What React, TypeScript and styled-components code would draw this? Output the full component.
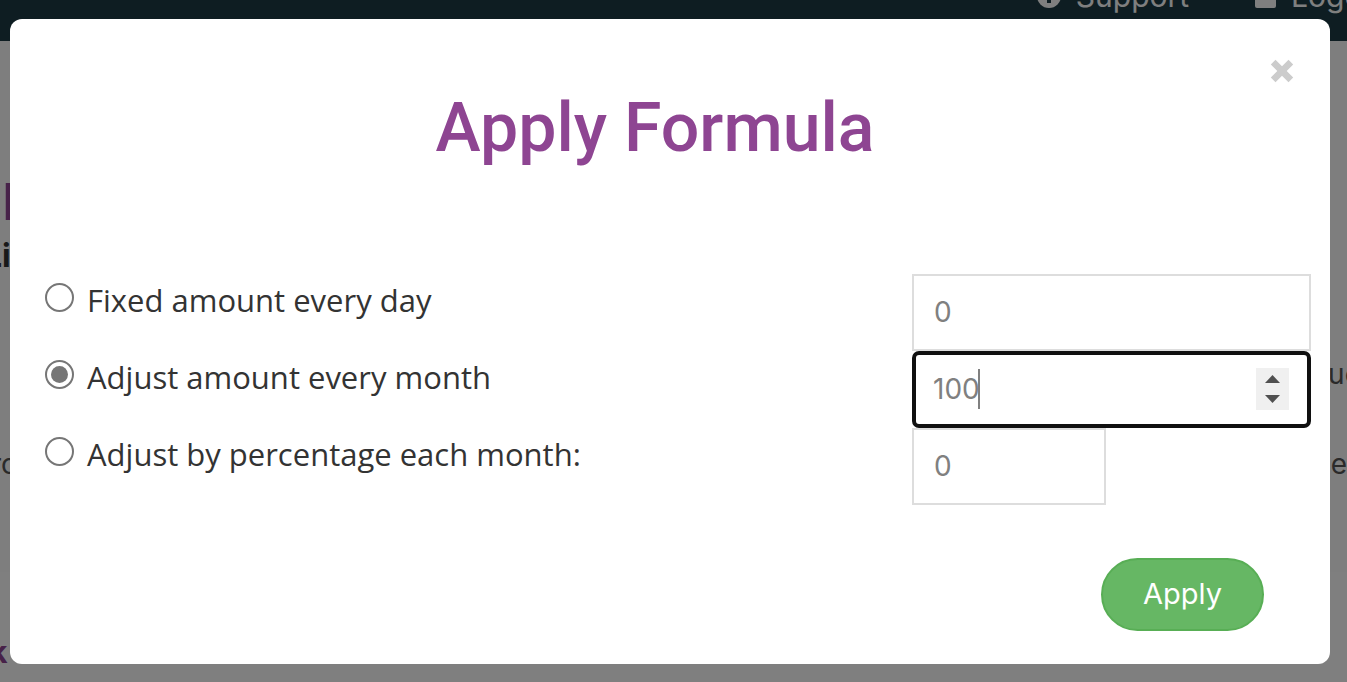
import React, { useState } from "react";
import styled, { createGlobalStyle, css } from "styled-components";

const GlobalStyle = createGlobalStyle`
  *, *::before, *::after { box-sizing: border-box; }
  body { margin: 0; background: #ffffff; }
`;

const uiFont = `Inter, "Liberation Sans", sans-serif`;
const labelFont = `"Open Sans", "Noto Sans", sans-serif`;
const titleFont = `Roboto, "Liberation Sans", sans-serif`;

const Page = styled.div`
  display: flex;
  flex-direction: column;
  height: 100vh;
  overflow: hidden;
  font-family: ${uiFont};
  color: #555555;
`;

const TopBar = styled.header`
  display: flex;
  flex: none;
  justify-content: flex-end;
  align-items: flex-start;
  height: 41px;
  overflow: hidden;
  background: #1c3b44;
`;

const TopNav = styled.nav`
  display: flex;
  flex: none;
  gap: 66px;
  margin: -24px -43px 0 0;
`;

const TopLink = styled.a`
  display: flex;
  align-items: center;
  gap: 15px;
  font-size: 30px;
  line-height: 40px;
  color: #ffffff;
  text-decoration: none;
`;

const Content = styled.main`
  flex: none;
  height: 531px;
  background: #fcfcfc;
  overflow: hidden;
`;

const Below = styled.section`
  flex: 1;
  padding-top: 60px;
  overflow: hidden;
`;

const PageTitle = styled.h1`
  margin: 132px 0 0 2px;
  font: 500 52px/60px ${titleFont};
  color: #8e4592;
`;

const SubTitle = styled.h2`
  margin: 3px 0 0 -16px;
  font: 700 32px/40px ${uiFont};
  color: #333333;
`;

const EdgeRow = styled.div<{ $gap: number; $bleed: number }>`
  display: flex;
  justify-content: space-between;
  margin: ${(p) => p.$gap}px ${(p) => -p.$bleed}px 0 -9px;
  font-size: 28px;
  line-height: 40px;
`;

const LowerTitle = styled.h3`
  margin: 0 0 0 -10px;
  font: 700 32px/40px ${titleFont};
  color: #8e4592;
`;

const Overlay = styled.div`
  position: fixed;
  inset: 0;
  padding: 19px 17px 18px 10px;
  overflow: auto;
  background: rgba(0, 0, 0, 0.5);
`;

const Dialog = styled.section`
  padding-bottom: 33px;
  border-radius: 12px;
  background: #ffffff;
`;

const CloseRow = styled.div`
  display: flex;
  justify-content: flex-end;
  padding: 40px 36px 0 0;
`;

const CloseButton = styled.button`
  display: flex;
  padding: 0;
  border: 0;
  background: none;
  cursor: pointer;
`;

const Title = styled.h2`
  margin: 0;
  padding-right: 30px;
  font: 500 68px/90px ${titleFont};
  color: #8e4592;
  text-align: center;
`;

const Form = styled.form`
  padding: 101px 19px 0 35px;
`;

const Row = styled.div`
  display: grid;
  grid-template-columns: 867fr 399fr;
  height: 77px;
`;

const Option = styled.label`
  display: flex;
  align-items: flex-start;
  gap: 13px;
  padding-top: 5px;
  font: 400 31px/42px ${labelFont};
  color: #333333;
`;

const Radio = styled.input`
  appearance: none;
  display: grid;
  place-items: center;
  flex: none;
  width: 29px;
  height: 29px;
  margin: 4px 0 0;
  border: 2px solid #767676;
  border-radius: 50%;

  &:checked::before {
    content: "";
    width: 17px;
    height: 17px;
    border-radius: 50%;
    background: #767676;
  }
`;

const Field = styled.div<{ $half?: boolean }>`
  position: relative;
  width: ${(p) => (p.$half ? "194px" : "100%")};
`;

const NumberInput = styled.input<{ $active?: boolean }>`
  display: block;
  appearance: textfield;
  width: 100%;
  height: 77px;
  padding: 0 20px 2px;
  border: 2px solid #dddddd;
  border-radius: 0;
  outline: none;
  background: #ffffff;
  font: 400 28px/40px ${uiFont};
  color: #808080;

  &::-webkit-inner-spin-button { appearance: none; margin: 0; }

  ${(p) =>
    p.$active &&
    css`
      padding: 0 17px 2px;
      border: 4px solid #101010;
      border-radius: 7px;
    `}
`;

const Caret = styled.span`
  position: absolute;
  top: 18px;
  left: 66px;
  width: 2px;
  height: 40px;
  background: #808080;
`;

const Stepper = styled.div`
  position: absolute;
  top: 17px;
  right: 22px;
  display: flex;
  flex-direction: column;
  width: 33px;
  height: 42px;
  background: #f0f0f0;
`;

const StepButton = styled.button<{ $down?: boolean }>`
  display: flex;
  flex: 1;
  justify-content: center;
  align-items: ${(p) => (p.$down ? "flex-start" : "flex-end")};
  padding: 6px 0;
  border: 0;
  background: none;
`;

const Actions = styled.div`
  display: flex;
  justify-content: flex-end;
  padding: 53px 47px 0 0;
`;

const ApplyButton = styled.button`
  height: 73px;
  padding: 0 40px 2px;
  border: 2px solid #58ae55;
  border-radius: 37px;
  background: #66b764;
  font: 400 29px/40px ${uiFont};
  color: #ffffff;
  cursor: pointer;
`;

const options = [
  { id: "fixed", label: "Fixed amount every day", initial: "0" },
  { id: "monthly", label: "Adjust amount every month", initial: "100" },
  { id: "percent", label: "Adjust by percentage each month:", initial: "0" },
];

export default function App() {
  const [selected, setSelected] = useState("monthly");
  const [values, setValues] = useState<Record<string, string>>(
    Object.fromEntries(options.map((o) => [o.id, o.initial]))
  );
  const change = (id: string, value: string) =>
    setValues((v) => ({ ...v, [id]: value }));
  const step = (id: string, by: number) =>
    change(id, String(Number(values[id]) + by));

  return (
    <>
      <GlobalStyle />
      <Page>
        <TopBar>
          <TopNav>
            <TopLink href="#support">
              <svg width="24" height="24" viewBox="0 0 24 24">
                <circle cx="12" cy="12" r="12" fill="#fff" />
                <path d="M10 5h4v3h-4zM10 10h4v9h-4z" fill="#1c3b44" />
              </svg>
              Support
            </TopLink>
            <TopLink href="#logout">
              <svg width="21" height="26" viewBox="0 0 21 26">
                <path d="M5 12V7a5.5 5.5 0 0 1 11 0v5" fill="none" stroke="#fff" strokeWidth="3" />
                <rect y="11" width="21" height="14" rx="2" fill="#fff" />
              </svg>
              Logout
            </TopLink>
          </TopNav>
        </TopBar>
        <Content>
          <PageTitle>F</PageTitle>
          <SubTitle>Li</SubTitle>
          <EdgeRow $gap={78} $bleed={14}>
            <span />
            <span>ue</span>
          </EdgeRow>
          <EdgeRow $gap={50} $bleed={0}>
            <span>ro</span>
            <span>e</span>
          </EdgeRow>
        </Content>
        <Below>
          <LowerTitle>k</LowerTitle>
        </Below>
      </Page>

      <Overlay>
        <Dialog role="dialog" aria-modal="true" aria-labelledby="dialog-title">
          <CloseRow>
            <CloseButton type="button" aria-label="Close">
              <svg width="24" height="24" viewBox="0 0 24 24">
                <path
                  d="M5.5.8 12 7.3 18.5.8l4.7 4.7-6.5 6.5 6.5 6.5-4.7 4.7-6.5-6.5-6.5 6.5-4.7-4.7L7.3 12 .8 5.5z"
                  fill="#cccccc"
                />
              </svg>
            </CloseButton>
          </CloseRow>
          <Title id="dialog-title">Apply Formula</Title>
          <Form onSubmit={(e) => e.preventDefault()}>
            {options.map(({ id, label }) => {
              const active = id === "monthly";
              return (
                <Row key={id}>
                  <Option>
                    <Radio
                      type="radio"
                      name="formula"
                      checked={selected === id}
                      onChange={() => setSelected(id)}
                    />
                    {label}
                  </Option>
                  <Field $half={id === "percent"}>
                    <NumberInput
                      type="number"
                      aria-label={label}
                      value={values[id]}
                      $active={active}
                      onChange={(e) => change(id, e.target.value)}
                    />
                    {active && (
                      <>
                        <Caret />
                        <Stepper>
                          <StepButton type="button" aria-label="Increase" onClick={() => step(id, 1)}>
                            <svg width="15" height="8" viewBox="0 0 15 8">
                              <path d="M0 8 7.5 0 15 8z" fill="#505050" />
                            </svg>
                          </StepButton>
                          <StepButton type="button" aria-label="Decrease" $down onClick={() => step(id, -1)}>
                            <svg width="15" height="8" viewBox="0 0 15 8">
                              <path d="M0 0 7.5 8 15 0z" fill="#505050" />
                            </svg>
                          </StepButton>
                        </Stepper>
                      </>
                    )}
                  </Field>
                </Row>
              );
            })}
            <Actions>
              <ApplyButton type="submit">Apply</ApplyButton>
            </Actions>
          </Form>
        </Dialog>
      </Overlay>
    </>
  );
}
